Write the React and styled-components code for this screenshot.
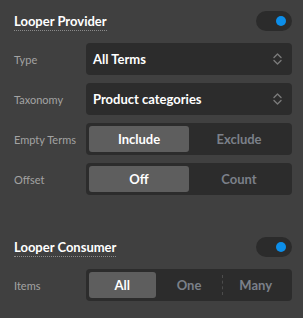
import React, { useState } from 'react'
import styled, { createGlobalStyle } from 'styled-components'

const Global = createGlobalStyle`
  html, body { margin: 0; padding: 0; background: #404040; }
  body { font-family: "Lato", "Open Sans", sans-serif; }
`

const Panel = styled.div`
  width: 303px;
  height: 318px;
  box-sizing: border-box;
  padding: 11px 11px 0 14px;
  display: flex;
  flex-direction: column;
  gap: 42px;
`

const Section = styled.div`
  display: flex;
  flex-direction: column;
`

const Header = styled.div`
  height: 20px;
  display: flex;
  align-items: center;
  justify-content: space-between;
  margin-bottom: 12px;
`

const Title = styled.span`
  color: #fff;
  font-size: 13px;
  font-weight: 700;
  line-height: 16px;
  border-bottom: 1px dotted #8a8a8a;
  padding-bottom: 1px;
  margin-top: 2px;
`

const Toggle = styled.button`
  width: 36px;
  height: 20px;
  border: 0;
  border-radius: 10px;
  background: #2b2b2b;
  display: flex;
  align-items: center;
  justify-content: ${p => (p.$on ? 'flex-end' : 'flex-start')};
  padding: 0 6px;
  cursor: pointer;
  &::after {
    content: '';
    width: 10px;
    height: 10px;
    border-radius: 50%;
    background: ${p => (p.$on ? '#0c8ee9' : '#777')};
  }
`

const Rows = styled.div`
  display: flex;
  flex-direction: column;
  gap: 8px;
`

const Row = styled.div`
  display: grid;
  grid-template-columns: 72px 1fr;
  align-items: center;
  height: 32px;
`

const Label = styled.span`
  color: #a3a3a3;
  font-size: 11px;
`

const Select = styled.div`
  height: 32px;
  border-radius: 4px;
  background: #2c2c2c;
  display: flex;
  align-items: center;
  justify-content: space-between;
  padding: 0 10px 0 7px;
  color: #fff;
  font-size: 13px;
  font-weight: 700;
`

const Segmented = styled.div`
  height: 32px;
  box-sizing: border-box;
  border-radius: 4px;
  background: #2c2c2c;
  padding: 3px;
  display: flex;
`

const Seg = styled.button`
  flex: 1;
  border: 0;
  border-radius: 3px;
  background: ${p => (p.$active ? '#5e5e5e' : 'transparent')};
  color: ${p => (p.$active ? '#fff' : '#7b8089')};
  font-family: inherit;
  font-size: 13px;
  font-weight: 700;
  position: relative;
  cursor: pointer;
  padding: 0;
  &::before {
    content: '';
    display: ${p => (p.$divider ? 'block' : 'none')};
    position: absolute;
    left: 0;
    top: 3px;
    bottom: 3px;
    border-left: 1px dashed #4c4c4c;
  }
`

const Chevrons = () => (
  <svg width="9" height="12" viewBox="0 0 9 12" fill="none" stroke="#7a7a7a" strokeWidth="1.4" strokeLinecap="round" strokeLinejoin="round">
    <path d="M1 4.5 L4.5 1 L8 4.5" />
    <path d="M1 7.5 L4.5 11 L8 7.5" />
  </svg>
)

const SegmentControl = ({ options, value, onChange }) => {
  const idx = options.indexOf(value)
  return (
    <Segmented>
      {options.map((o, i) => (
        <Seg
          key={o}
          $active={o === value}
          $divider={i > 0 && i !== idx && i - 1 !== idx}
          onClick={() => onChange(o)}
        >
          {o}
        </Seg>
      ))}
    </Segmented>
  )
}

export default function App() {
  const [provider, setProvider] = useState(true)
  const [consumer, setConsumer] = useState(true)
  const [empty, setEmpty] = useState('Include')
  const [offset, setOffset] = useState('Off')
  const [items, setItems] = useState('All')

  return (
    <>
      <Global />
      <Panel>
        <Section>
          <Header>
            <Title>Looper Provider</Title>
            <Toggle $on={provider} onClick={() => setProvider(!provider)} />
          </Header>
          <Rows>
            <Row>
              <Label>Type</Label>
              <Select>All Terms<Chevrons /></Select>
            </Row>
            <Row>
              <Label>Taxonomy</Label>
              <Select>Product categories<Chevrons /></Select>
            </Row>
            <Row>
              <Label>Empty Terms</Label>
              <SegmentControl options={['Include', 'Exclude']} value={empty} onChange={setEmpty} />
            </Row>
            <Row>
              <Label>Offset</Label>
              <SegmentControl options={['Off', 'Count']} value={offset} onChange={setOffset} />
            </Row>
          </Rows>
        </Section>
        <Section>
          <Header>
            <Title>Looper Consumer</Title>
            <Toggle $on={consumer} onClick={() => setConsumer(!consumer)} />
          </Header>
          <Rows>
            <Row>
              <Label>Items</Label>
              <SegmentControl options={['All', 'One', 'Many']} value={items} onChange={setItems} />
            </Row>
          </Rows>
        </Section>
      </Panel>
    </>
  )
}
